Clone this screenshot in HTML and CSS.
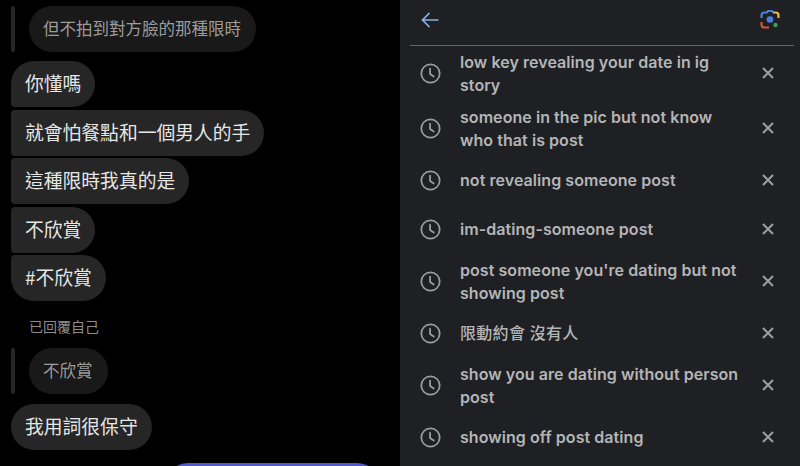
FILE: index.html
```html
<!DOCTYPE html>
<html lang="zh-Hant">
<head>
    <meta charset="UTF-8">
    <title>Chat and search history</title>
    <link rel="stylesheet" href="styles.css">
</head>
<body>
    <svg class="icon-defs" width="0" height="0">
        <symbol id="clock" viewBox="0 0 24 24">
            <circle cx="12" cy="12" r="10.500" fill="none" stroke="currentColor" stroke-width="2"/>
            <path d="M11.500 6.500v6l4.200 3" fill="none" stroke="currentColor" stroke-width="2" stroke-linecap="round" stroke-linejoin="round"/>
        </symbol>
        <symbol id="close" viewBox="0 0 12 12">
            <path d="M1 1l10 10M11 1L1 11" fill="none" stroke="currentColor" stroke-width="2.100"/>
        </symbol>
    </svg>

    <!-- Chat -->
    <div class="chat">
        <div class="reply">
            <div class="reply-bar"></div>
            <div class="reply-bubble">但不拍到對方臉的那種限時</div>
        </div>
        <div class="msg-group">
            <div class="bubble">你懂嗎</div>
            <div class="bubble">就會怕餐點和一個男人的手</div>
            <div class="bubble">這種限時我真的是</div>
            <div class="bubble">不欣賞</div>
            <div class="bubble">#不欣賞</div>
        </div>
        <div class="reply-label">已回覆自己</div>
        <div class="reply">
            <div class="reply-bar"></div>
            <div class="reply-bubble">不欣賞</div>
        </div>
        <div class="bubble single">我用詞很保守</div>
        <div class="own-bubble"></div>
    </div>

    <!-- Search history -->
    <div class="search">
        <div class="search-head">
            <svg class="back" width="20" height="18" viewBox="0 0 20 18">
                <path d="M18.500 9H2.500M9.500 2L2.500 9l7 7" fill="none" stroke="currentColor" stroke-width="1.700"/>
            </svg>
            <svg class="lens" width="22" height="22" viewBox="0 0 22 22">
                <path d="M2.500 9V6.500a3 3 0 0 1 3-3H8l1-1.500h4l1 1.500" fill="none" stroke="#4a80dd" stroke-width="2.200"/>
                <path d="M14 3.500h2.500a3 3 0 0 1 3 3V9" fill="none" stroke="#e8b93c" stroke-width="2.200"/>
                <path d="M2.500 13v2.500a3 3 0 0 0 3 3H10" fill="none" stroke="#d3543f" stroke-width="2.200"/>
                <circle cx="11" cy="10.500" r="3.300" fill="#4a80dd"/>
                <circle cx="16.500" cy="16" r="2.200" fill="#3f9e57"/>
            </svg>
        </div>
        <div class="row">
            <svg class="clock"><use href="#clock"/></svg>
            <div class="row-text">low key revealing your date in ig story</div>
            <svg class="close"><use href="#close"/></svg>
        </div>
        <div class="row">
            <svg class="clock"><use href="#clock"/></svg>
            <div class="row-text">someone in the pic but not know who that is post</div>
            <svg class="close"><use href="#close"/></svg>
        </div>
        <div class="row">
            <svg class="clock"><use href="#clock"/></svg>
            <div class="row-text">not revealing someone post</div>
            <svg class="close"><use href="#close"/></svg>
        </div>
        <div class="row">
            <svg class="clock"><use href="#clock"/></svg>
            <div class="row-text">im-dating-someone post</div>
            <svg class="close"><use href="#close"/></svg>
        </div>
        <div class="row">
            <svg class="clock"><use href="#clock"/></svg>
            <div class="row-text">post someone you're dating but not showing post</div>
            <svg class="close"><use href="#close"/></svg>
        </div>
        <div class="row">
            <svg class="clock"><use href="#clock"/></svg>
            <div class="row-text cjk">限動約會 沒有人</div>
            <svg class="close"><use href="#close"/></svg>
        </div>
        <div class="row">
            <svg class="clock"><use href="#clock"/></svg>
            <div class="row-text">show you are dating without person post</div>
            <svg class="close"><use href="#close"/></svg>
        </div>
        <div class="row">
            <svg class="clock"><use href="#clock"/></svg>
            <div class="row-text">showing off post dating</div>
            <svg class="close"><use href="#close"/></svg>
        </div>
    </div>
</body>
</html>
```

FILE: styles.css
```css
* {
    margin: 0;
    padding: 0;
    box-sizing: border-box;
}
html, body {
    height: 466px;
    overflow: hidden;
}
body {
    display: flex;
    background: #000;
    font-family: "Noto Sans CJK TC", sans-serif;
}
.icon-defs {
    position: absolute;
}

/* Chat */
.chat {
    width: 400px;
    height: 466px;
    overflow: hidden;
    background: #000;
    padding: 6px 0 0 11px;
    display: flex;
    flex-direction: column;
    align-items: flex-start;
}
.chat > * {
    flex-shrink: 0;
}
.reply {
    display: flex;
    gap: 14px;
    height: 46px;
}
.reply-bar {
    width: 4px;
    background: #262627;
    border-radius: 2px;
}
.reply-bubble {
    display: flex;
    align-items: center;
    padding: 0 15px 2px 14px;
    border-radius: 23px;
    background: #19191a;
    color: #9c9c9c;
    font-size: 16.5px;
}
.msg-group {
    display: flex;
    flex-direction: column;
    align-items: flex-start;
    gap: 2.5px;
    margin-top: 9px;
}
.bubble {
    display: flex;
    align-items: center;
    height: 46px;
    padding: 0 14px 3px;
    background: #262627;
    color: #e6e6e6;
    font-size: 18.8px;
    border-radius: 4px 23px 23px 4px;
}
.msg-group .bubble:first-child {
    border-top-left-radius: 23px;
}
.msg-group .bubble:last-child {
    border-bottom-left-radius: 23px;
}
.bubble.single {
    margin-top: 10px;
    border-radius: 23px;
}
.reply-label {
    margin: 15px 0 12px 18px;
    color: #8e8e8e;
    font-size: 14px;
    line-height: 20px;
}
.own-bubble {
    width: 215px;
    height: 46px;
    margin: 13px 0 0 154px;
    border-radius: 23px;
    background: #5457c8;
}

/* Search history */
.search {
    width: 400px;
    height: 466px;
    overflow: hidden;
    background: #1f2023;
    padding: 0 6px 0 10px;
}
.search-head {
    display: flex;
    justify-content: space-between;
    align-items: center;
    height: 46px;
    padding: 0 13px 5px 10px;
    border-bottom: 1px solid #636466;
}
.back {
    color: #8ab0ec;
}
.row {
    display: flex;
    align-items: center;
    min-height: 49px;
    padding: 4.5px 0 4.5px 10px;
    color: #b4b5b7;
}
.clock {
    width: 21px;
    height: 21px;
    margin-top: -1px;
    flex-shrink: 0;
    color: #9c9d9f;
}
.row-text {
    width: 282px;
    margin-left: 19px;
    font-family: Inter, "Noto Sans CJK TC", sans-serif;
    font-size: 16px;
    font-weight: 600;
    line-height: 23px;
    letter-spacing: 0.06px;
}
.row-text.cjk {
    font-weight: 500;
    letter-spacing: 0.3px;
}
.close {
    width: 12px;
    height: 12px;
    margin: -1px 0 0 20px;
    flex-shrink: 0;
    color: #9c9d9f;
}
```
